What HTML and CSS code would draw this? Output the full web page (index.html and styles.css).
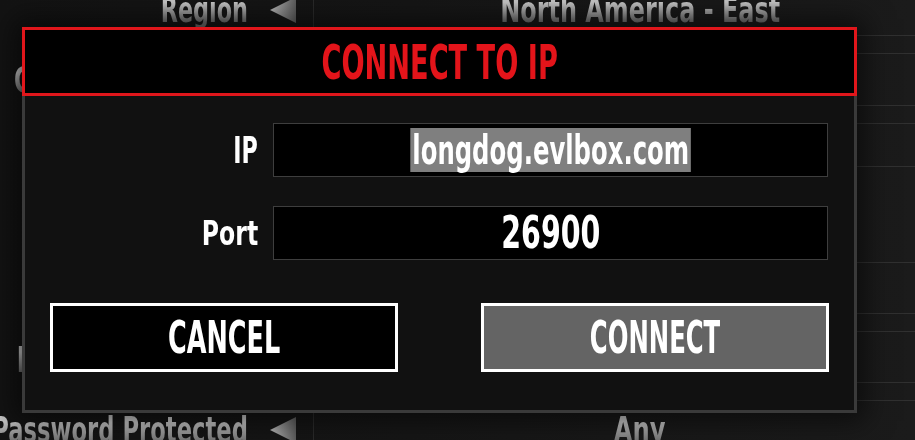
FILE: index.html
```html
<!DOCTYPE html>
<html lang="en">
<head>
<meta charset="utf-8">
<title>Connect to IP</title>
<link rel="stylesheet" href="styles.css">
</head>
<body>
<div class="screen">
  <div class="backdrop">
    <div class="filters">
      <div class="rows">
        <div class="lrow">
          <div class="lbl"><span class="txt txt-region">Region</span></div>
          <svg class="arrow" viewBox="0 0 26 26" width="26" height="26"><defs><linearGradient id="tri" x1="0" y1="0" x2="1" y2="0"><stop offset="0" stop-color="#b8b8b8"/><stop offset="1" stop-color="#5c5c5c"/></linearGradient></defs><polygon points="0,13 26,0 26,26" fill="url(#tri)"/></svg>
        </div>
        <div class="lrow">
          <div class="lbl"><span class="txt">Crossplay Enabled</span></div>
          <svg class="arrow" viewBox="0 0 26 26" width="26" height="26"><polygon points="0,13 26,0 26,26" fill="url(#tri)"/></svg>
        </div>
        <div class="lrow">
          <div class="lbl"><span class="txt">Language</span></div>
          <svg class="arrow" viewBox="0 0 26 26" width="26" height="26"><polygon points="0,13 26,0 26,26" fill="url(#tri)"/></svg>
        </div>
        <div class="lrow">
          <div class="lbl"><span class="txt">Game Mode</span></div>
          <svg class="arrow" viewBox="0 0 26 26" width="26" height="26"><polygon points="0,13 26,0 26,26" fill="url(#tri)"/></svg>
        </div>
        <div class="lrow">
          <div class="lbl"><span class="txt">Difficulty</span></div>
          <svg class="arrow" viewBox="0 0 26 26" width="26" height="26"><polygon points="0,13 26,0 26,26" fill="url(#tri)"/></svg>
        </div>
        <div class="lrow">
          <div class="lbl"><span class="txt">Ignore Full Games</span></div>
          <svg class="arrow" viewBox="0 0 26 26" width="26" height="26"><polygon points="0,13 26,0 26,26" fill="url(#tri)"/></svg>
        </div>
        <div class="lrow">
          <div class="lbl"><span class="txt txt-pw">Password Protected</span></div>
          <svg class="arrow" viewBox="0 0 26 26" width="26" height="26"><polygon points="0,13 26,0 26,26" fill="url(#tri)"/></svg>
        </div>
      </div>
    </div>
    <div class="values">
      <div class="rules">
        <div class="rule g35"></div>
        <div class="rule g17"></div>
        <div class="rule g51"></div>
        <div class="rule g17"></div>
        <div class="rule g42"></div>
        <div class="rule g95"></div>
        <div class="rule g50"></div>
        <div class="rule g17"></div>
        <div class="rule g50"></div>
        <div class="rule g17"></div>
      </div>
      <div class="vals">
        <div class="vrow"><span class="txt txt-na">North America - East</span></div>
        <div class="vrow"><span class="txt">Any</span></div>
        <div class="vrow"><span class="txt">Any</span></div>
        <div class="vrow"><span class="txt">Any</span></div>
        <div class="vrow"><span class="txt">Any</span></div>
        <div class="vrow"><span class="txt">No</span></div>
        <div class="vrow"><span class="txt txt-any">Any</span></div>
      </div>
    </div>
  </div>

  <div class="dialog">
    <div class="dlg-header"><span class="title">CONNECT TO IP</span></div>
    <div class="dlg-body">
      <div class="form">
        <div class="flabel"><span class="flabel-ip">IP</span></div>
        <div class="field"><span class="ipval">longdog.evlbox.com</span></div>
        <div class="flabel"><span class="flabel-port">Port</span></div>
        <div class="field"><span class="portval">26900</span></div>
      </div>
      <div class="buttons">
        <div class="btn btn-cancel"><span class="btn-cancel-txt">CANCEL</span></div>
        <div class="btn btn-connect"><span class="btn-connect-txt">CONNECT</span></div>
      </div>
    </div>
  </div>
</div>
</body>
</html>
```

FILE: styles.css
```css
html, body {
  margin: 0;
  padding: 0;
  background: #141414;
}

.screen {
  width: 915px;
  height: 440px;
  position: relative;
  overflow: hidden;
  background: linear-gradient(90deg, #131313 0%, #161616 45%, #1b1b1b 100%);
  font-family: "DejaVu Sans Condensed", "Liberation Sans Narrow", "Arial Narrow", sans-serif;
  font-weight: 700;
}

/* ---------- background filter list ---------- */
.backdrop {
  display: flex;
  height: 440px;
}

.filters {
  width: 313px;
  flex: none;
  border-right: 1px solid #2a2a2a;
}

.rows {
  margin-top: -25px;
}

.lrow {
  height: 70px;
  display: flex;
  align-items: center;
}

.lbl {
  width: 248px;
  flex: none;
  display: flex;
  align-items: center;
  justify-content: flex-end;
  height: 70px;
  white-space: nowrap;
}

.txt {
  display: inline-block;
  font-size: 35px;
  line-height: 41px;
  background: linear-gradient(180deg, #c6c6c6 30%, #6e6e6e 78%);
  -webkit-background-clip: text;
  background-clip: text;
  color: transparent;
  white-space: nowrap;
  flex: none;
}

.lbl .txt {
  transform: scaleX(0.72);
  transform-origin: right center;
}

.lbl .txt-region {
  transform: scaleX(0.71);
}

.arrow {
  flex: none;
  margin-left: 22px;
  display: block;
}

.values {
  flex: 1;
  display: grid;
}

.values > * {
  grid-area: 1 / 1;
}

.rules {
  display: flex;
  flex-direction: column;
}

.rule {
  height: 1px;
  background: #303030;
  flex: none;
}

.g17 { margin-top: 17px; }
.g35 { margin-top: 35px; }
.g42 { margin-top: 42px; }
.g50 { margin-top: 50px; }
.g51 { margin-top: 51px; }
.g95 { margin-top: 95px; }

.vals {
  margin-top: -25px;
  padding-left: 51px;
  display: flex;
  flex-direction: column;
}

.vrow {
  height: 70px;
  display: flex;
  align-items: center;
  justify-content: center;
  white-space: nowrap;
}

.vrow .txt {
  transform: scaleX(0.77);
}

.vrow .txt-na {
  transform: scaleX(0.76);
}

/* ---------- dialog ---------- */
.dialog {
  position: absolute;
  left: 22px;
  top: 27px;
  width: 835px;
  box-shadow: 0 0 26px 8px rgba(0, 0, 0, 0.55);
}

.dlg-header {
  box-sizing: border-box;
  height: 69px;
  border: 3px solid #e0161b;
  background: #000;
  display: flex;
  align-items: center;
  justify-content: center;
}

.title {
  display: inline-block;
  font-size: 48px;
  line-height: 1;
  color: #e3141a;
  transform: scaleX(0.63);
  white-space: nowrap;
}

.dlg-body {
  border: 3px solid #3a3a3a;
  border-top: 0;
  background: #111111;
  padding: 27px 0 38px;
}

.form {
  display: grid;
  grid-template-columns: 233px 555px;
  grid-auto-rows: 54px;
  column-gap: 15px;
  row-gap: 29px;
}

.flabel {
  display: flex;
  align-items: center;
  justify-content: flex-end;
  color: #ffffff;
  white-space: nowrap;
}

.flabel span {
  display: inline-block;
  line-height: 1;
  transform-origin: right center;
}

.flabel-ip {
  font-size: 38px;
  transform: scaleX(0.65);
}

.flabel-port {
  font-size: 34px;
  transform: scaleX(0.77);
}

.field {
  box-sizing: border-box;
  border: 1px solid #3e3e3e;
  background: #000;
  display: flex;
  align-items: center;
  justify-content: center;
  color: #ffffff;
  white-space: nowrap;
}

.ipval {
  display: inline-block;
  font-size: 40px;
  line-height: 44px;
  padding: 0 3px;
  background: #7f7f7f;
  transform: scaleX(0.676);
}

.portval {
  display: inline-block;
  font-size: 44px;
  line-height: 1;
  transform: scaleX(0.72);
}

.buttons {
  display: flex;
  justify-content: space-between;
  padding: 0 25px;
  margin-top: 43px;
}

.btn {
  box-sizing: border-box;
  width: 348px;
  height: 69px;
  border: 3px solid #ffffff;
  display: flex;
  align-items: center;
  justify-content: center;
  color: #ffffff;
  white-space: nowrap;
}

.btn span {
  display: inline-block;
  font-size: 44px;
  line-height: 1;
}

.btn-cancel {
  background: #000;
}

.btn-connect {
  background: #646464;
}

.btn-cancel-txt {
  transform: scaleX(0.645);
}

.btn-connect-txt {
  transform: scaleX(0.615);
}
```
